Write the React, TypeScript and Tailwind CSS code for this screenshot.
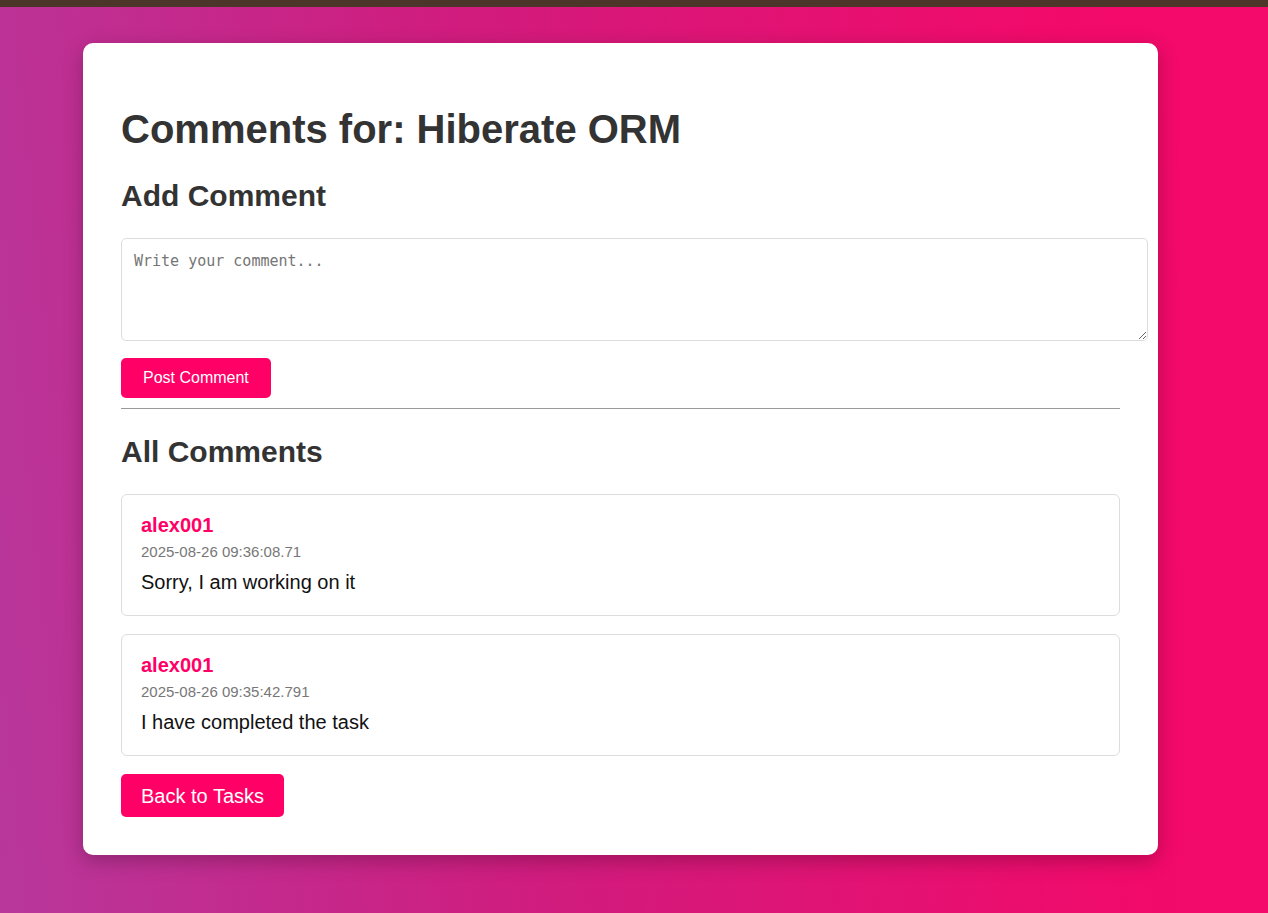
const comments = [
  { user: "alex001", time: "2025-08-26 09:36:08.71", text: "Sorry, I am working on it" },
  { user: "alex001", time: "2025-08-26 09:35:42.791", text: "I have completed the task" },
];

export default function App() {
  return (
    <div className="min-h-screen flex flex-col font-['Liberation_Sans',Arial,sans-serif]">
      {/* Top stripe */}
      <div className="h-[7px] bg-[#4b3629]" />

      <main className="flex-1 bg-[linear-gradient(84deg,#b8379b_0%,#d01c7e_40%,#f20a6a_85%,#f40a6a_100%)] pt-[36px] pb-[58px]">
        <div className="ml-[83px] w-[1075px] rounded-[10px] bg-white px-[38px] pt-[63px] pb-[38px] shadow-[0_6px_20px_rgba(0,0,0,0.25)]">
          <h1 className="text-[40px] font-bold leading-[46px] text-[#333]">Comments for: Hiberate ORM</h1>

          <h2 className="mt-[27px] text-[30px] font-bold leading-[34px] text-[#333]">Add Comment</h2>

          <textarea
            placeholder="Write your comment..."
            className="mt-[25px] block h-[103px] w-[calc(100%+28px)] resize-y rounded-[5px] border border-[#ddd] px-[12px] py-[11px] font-['DejaVu_Sans_Mono',monospace] text-[15px] text-[#333] placeholder:text-[#757575] outline-none"
          />

          <button className="mt-[17px] h-[40px] rounded-[5px] bg-[#ff0066] px-[22px] text-[16px] text-white">
            Post Comment
          </button>

          <hr className="mt-[10px] border-0 border-t border-[#999]" />

          <h2 className="mt-[26px] text-[30px] font-bold leading-[34px] text-[#333]">All Comments</h2>

          <div className="mt-[25px] flex flex-col gap-[18px]">
            {comments.map((c, i) => (
              <div key={i} className="rounded-[6px] border border-[#ddd] px-[19px] pt-[19px] pb-[21px]">
                <div className="text-[20px] font-bold leading-[22px] text-[#ff0066]">{c.user}</div>
                <div className="mt-[7px] text-[15px] leading-[17px] text-[#777]">{c.time}</div>
                <div className="mt-[11px] text-[20px] leading-[23px] text-[#111]">{c.text}</div>
              </div>
            ))}
          </div>

          <button className="mt-[18px] h-[43px] rounded-[5px] bg-[#ff0066] px-[20px] text-[20px] text-white">
            Back to Tasks
          </button>
        </div>
      </main>
    </div>
  );
}
